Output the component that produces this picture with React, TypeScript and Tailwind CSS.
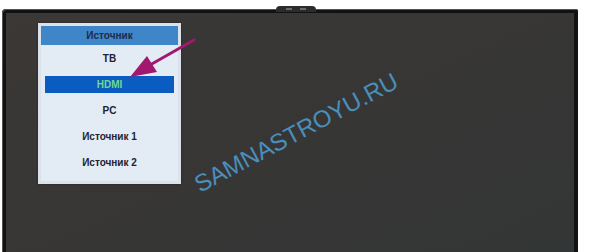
const items = ["ТВ", "HDMI", "PC", "Источник 1", "Источник 2"];

function SourceMenu() {
  return (
    <div className="w-[143px] h-[161px] bg-[#dbe2ea] p-[3px] shadow-[0_0_2px_rgba(0,0,0,0.4)]">
      <div className="h-full bg-[#e3ebf4] flex flex-col">
        <div className="h-[19px] bg-[#3f86c8] flex items-center justify-center text-[10px] font-bold text-[#1b2a4c]">
          Источник
        </div>
        {items.map((item) => (
          <div key={item} className="h-[26px] flex items-center px-[4px]">
            {item === "HDMI" ? (
              <div className="w-full h-[17px] bg-[#0b5cc0] flex items-center justify-center text-[10px] font-bold text-[#6fd891]">
                {item}
              </div>
            ) : (
              <div className="w-full text-center text-[10px] font-bold text-[#1e2333]">{item}</div>
            )}
          </div>
        ))}
      </div>
    </div>
  );
}

export default function App() {
  return (
    <div className="relative w-[590px] h-[252px] bg-white overflow-hidden pt-[9px] pl-[2px] font-['Liberation_Sans',Arial,sans-serif]">
      {/* TV frame */}
      <div className="w-[576px] h-[260px] bg-[#121212] rounded-tl-[4px] rounded-tr-[2px] p-[4px] pb-0 shadow-[inset_1px_1px_0_#555]">
        <div className="h-full bg-linear-to-br from-[#3b3836] via-[#373635] to-[#333636] pt-[10px] pl-[32px]">
          <SourceMenu />
        </div>
      </div>

      {/* camera bump */}
      <div className="absolute left-[276px] top-[6px] w-[40px] h-[6px] bg-[#2c2c2c] rounded-t-[4px] flex items-center justify-center gap-[8px]">
        <span className="w-[6px] h-[2px] bg-[#6a6a6a]" />
        <span className="w-[6px] h-[2px] bg-[#6a6a6a]" />
      </div>

      {/* arrow */}
      <svg className="absolute left-0 top-0" width="590" height="252" viewBox="0 0 590 252">
        <line x1="194" y1="40" x2="150" y2="65" stroke="#a3186f" strokeWidth="3" strokeLinecap="round" />
        <polygon points="130,77 147,56 157,72" fill="#a3186f" />
      </svg>

      {/* watermark */}
      <span className="absolute left-[200px] top-[173px] origin-[0_20px] rotate-[-28deg] text-[24px] leading-none whitespace-nowrap text-[#4a8fbc]">
        SAMNASTROYU.RU
      </span>
    </div>
  );
}
